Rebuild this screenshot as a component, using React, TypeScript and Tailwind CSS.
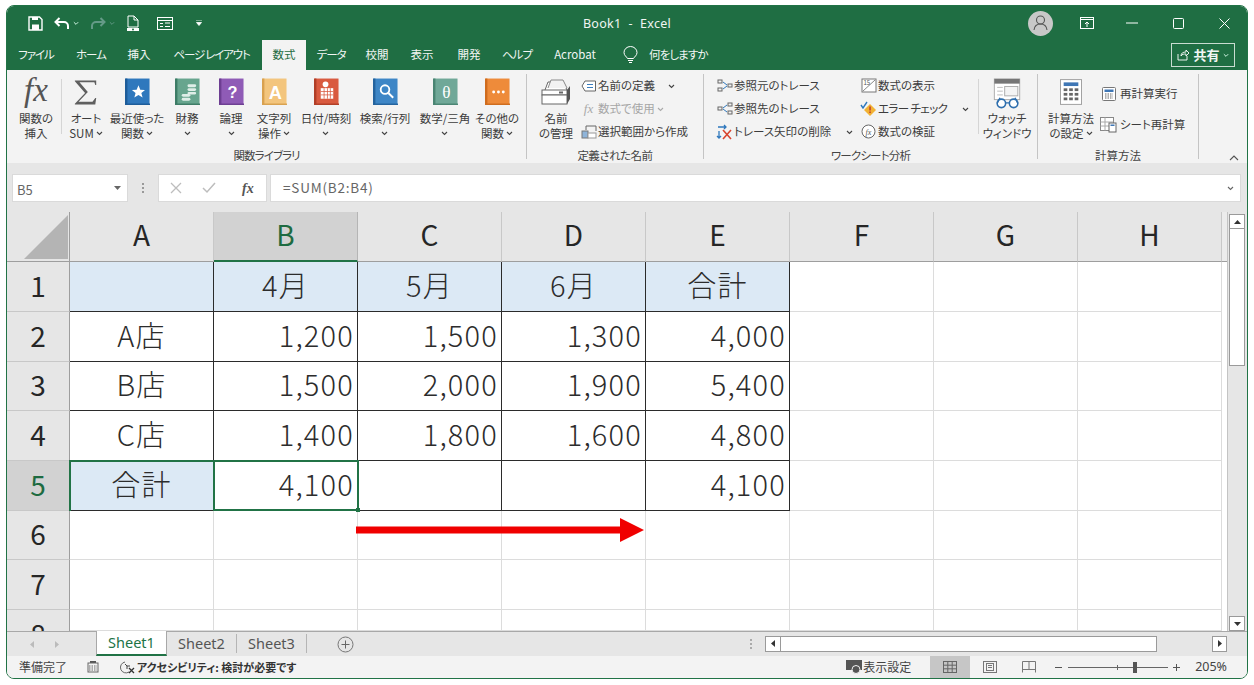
import React from "react";

const Chev = ({ c = "#444", w = 7 }: { c?: string; w?: number }) => (
  <svg width={w} height={5} viewBox="0 0 7 5" className="inline-block shrink-0"><path d="M1 1l2.5 2.5L6 1" fill="none" stroke={c} strokeWidth="1.1" /></svg>
);

const Book = ({ color, spine, children }: { color: string; spine: string; children: React.ReactNode }) => (
  <svg width="25" height="28" viewBox="0 0 26 28">
    <rect x="0.5" y="0" width="25" height="27" fill={color} />
    <rect x="0" y="0" width="2.5" height="27" fill={spine} />
    <rect x="0" y="26" width="26" height="1.5" fill={spine} />
    {children}
  </svg>
);

const G = ({ children, x = 14, y = 20, s = 17 }: { children: string; x?: number; y?: number; s?: number }) => (
  <text x={x} y={y} fontSize={s} fill="#fff" textAnchor="middle" fontWeight="700" fontFamily="Liberation Sans, sans-serif">{children}</text>
);

const ribbonIcons: Record<string, React.ReactNode> = {
  sigma: <svg width="26" height="27" viewBox="0 0 28 28"><path d="M2 1h23v5h-1l-1-3H7l9 10.5L6 24h15l3-4h1l-1 7H2v-1l11-11.5L2 2z" fill="#5f5f5f" /></svg>,
  star: <Book color="#2f78bd" spine="#1d5c99"><path d="M14 7l1.9 4.6 4.9.3-3.8 3.1 1.3 4.8-4.3-2.7-4.3 2.7 1.3-4.8-3.8-3.1 4.9-.3z" fill="#fff" /></Book>,
  coin: <Book color="#67a58e" spine="#3d7c66"><g fill="#dfeee8"><rect x="7" y="16" width="9" height="3" rx="1.5" /><rect x="7" y="20" width="9" height="3" rx="1.5" /><rect x="13" y="6" width="9" height="3" rx="1.5" /><rect x="13" y="10" width="9" height="3" rx="1.5" /><rect x="13" y="14" width="9" height="2.5" rx="1.2" /></g></Book>,
  q: <Book color="#8f5bb6" spine="#6d3e92"><G>?</G></Book>,
  a: <Book color="#f3c57d" spine="#d9a14f"><G s={19} y={21}>A</G></Book>,
  cal: <Book color="#d95a3f" spine="#b13e27"><circle cx="12" cy="6" r="3" fill="#fff" /><rect x="7" y="10" width="13" height="11" fill="#fff" /><path d="M7 13.5h13M7 17h13M10.5 10v11M14 10v11M17 10v11" stroke="#d95a3f" strokeWidth=".8" /></Book>,
  search: <Book color="#3e86c6" spine="#24639e"><circle cx="12.5" cy="11.5" r="4.5" fill="none" stroke="#fff" strokeWidth="1.9" /><path d="M16 15l5 5" stroke="#fff" strokeWidth="2" /></Book>,
  theta: <Book color="#70a898" spine="#4a8573"><text x="14" y="20" fontSize="18" fill="#fff" textAnchor="middle" fontFamily="Liberation Serif, serif">θ</text></Book>,
  more: <Book color="#ee8b3a" spine="#cf6c1e"><circle cx="9" cy="14" r="1.5" fill="#fff" /><circle cx="14" cy="14" r="1.5" fill="#fff" /><circle cx="19" cy="14" r="1.5" fill="#fff" /></Book>,
  name: <svg width="30" height="28" viewBox="0 0 30 28"><path d="M4 12l3-8h15l4 8" fill="#fff" stroke="#666" /><path d="M7 10l3-8h12l4 8" fill="#f2f2f2" stroke="#888" /><rect x="1" y="12" width="25" height="5" fill="#fff" stroke="#666" /><rect x="1" y="17" width="25" height="9" fill="#fff" stroke="#666" /><path d="M26 12l3-4v13l-3 5z" fill="#555" /><rect x="18" y="13.5" width="4" height="2" fill="#666" /></svg>,
  watch: <svg width="29" height="31" viewBox="0 0 30 33"><rect x="1" y="1" width="27" height="22" fill="#fff" stroke="#aaa" /><rect x="1" y="1" width="27" height="5" fill="#767676" /><path d="M4 10h6M4 14h6M4 18h6" stroke="#bbb" /><rect x="12" y="9" width="14" height="10" fill="#f4f4f4" stroke="#aaa" /><circle cx="8.5" cy="27" r="4.5" fill="#fff" stroke="#2f6fae" strokeWidth="1.7" /><circle cx="21.5" cy="27" r="4.5" fill="#fff" stroke="#2f6fae" strokeWidth="1.7" /><path d="M13 26.5h4M4 27l3-6M26 27l-3-6" stroke="#2f6fae" strokeWidth="1.5" fill="none" /></svg>,
  calc: <svg width="22" height="28" viewBox="0 0 24 28"><rect x=".5" y=".5" width="23" height="27" fill="#fff" stroke="#9a9a9a" /><rect x="4" y="3.5" width="16" height="4" fill="#3f77b5" /><g fill="#666"><rect x="4" y="10" width="4" height="3" /><rect x="10" y="10" width="4" height="3" /><rect x="16" y="10" width="4" height="3" /><rect x="4" y="15" width="4" height="3" /><rect x="10" y="15" width="4" height="3" /><rect x="16" y="15" width="4" height="3" /><rect x="4" y="20" width="4" height="3" /><rect x="10" y="20" width="4" height="3" /><rect x="16" y="20" width="4" height="3" /></g></svg>,
};

const bigs: { w: string; icon: React.ReactNode; lines: React.ReactNode[] }[] = [
  { w: "w-[48px]", icon: ribbonIcons.sigma, lines: ["オート", <>SUM <Chev /></>] },
  { w: "w-[54px]", icon: ribbonIcons.star, lines: ["最近使った", <>関数 <Chev /></>] },
  { w: "w-[46px]", icon: ribbonIcons.coin, lines: ["財務", <Chev />] },
  { w: "w-[42px]", icon: ribbonIcons.q, lines: ["論理", <Chev />] },
  { w: "w-[44px]", icon: ribbonIcons.a, lines: ["文字列", <>操作 <Chev /></>] },
  { w: "w-[60px]", icon: ribbonIcons.cal, lines: ["日付/時刻", <Chev />] },
  { w: "w-[58px]", icon: ribbonIcons.search, lines: ["検索/行列", <Chev />] },
  { w: "w-[62px]", icon: ribbonIcons.theta, lines: ["数学/三角", <Chev />] },
  { w: "w-[42px]", icon: ribbonIcons.more, lines: ["その他の", <>関数 <Chev /></>] },
];

const Big = ({ w, icon, lines, gap = "h-[36px]", mt = "mt-[5px]" }: { w: string; icon: React.ReactNode; lines: React.ReactNode[]; gap?: string; mt?: string }) => (
  <div className={`${w} shrink-0 flex flex-col items-center`}>
    <div className={`${gap} flex items-end justify-center`}>{icon}</div>
    <div className={`${mt} leading-[15px] text-center whitespace-nowrap`}>
      {lines.map((l, i) => <div key={i} className="h-[15px] flex items-center justify-center gap-[2px]">{l}</div>)}
    </div>
  </div>
);

const Sm = ({ icon, text, muted, chev, cls = "" }: { icon: React.ReactNode; text: string; muted?: boolean; chev?: React.ReactNode; cls?: string }) => (
  <div className={`h-[23px] flex items-center whitespace-nowrap ${muted ? "text-[#a6a6a6]" : ""}`}>
    <span className="w-[19px] flex justify-center shrink-0">{icon}</span>
    <span className={cls}>{text}</span>
    {chev}
  </div>
);

const small = {
  def: <svg width="16" height="12" viewBox="0 0 16 12"><path d="M4 1h10.500v10H4L1 6z" fill="#fff" stroke="#666" /><path d="M6 4.500h6M6 7.500h6" stroke="#3b7ebf" /></svg>,
  use: <span className="font-['Liberation_Serif'] italic text-[13px] text-[#aaa]">fx</span>,
  sel: <svg width="16" height="14" viewBox="0 0 16 14"><rect x="1" y="6" width="6" height="7" fill="#8fb4d9" stroke="#777" /><rect x="7" y="8" width="8" height="5" fill="#fff" stroke="#999" /><path d="M5 5V1h10v5" fill="none" stroke="#666" /></svg>,
  prec: <svg width="16" height="14" viewBox="0 0 16 14"><g fill="none" stroke="#666"><rect x="1" y="1" width="4" height="3" /><rect x="1" y="9" width="4" height="3" /><rect x="11" y="5" width="4" height="3" /></g><path d="M6 3l4 3M6 10l4-3" stroke="#2f78bd" /></svg>,
  dep: <svg width="16" height="14" viewBox="0 0 16 14"><g fill="none" stroke="#666"><rect x="1" y="5" width="4" height="3" /><rect x="11" y="1" width="4" height="3" /><rect x="11" y="9" width="4" height="3" /></g><path d="M6 6l4-3M6 7l4 3" stroke="#2f78bd" /></svg>,
  rem: <svg width="17" height="16" viewBox="0 0 17 16"><path d="M2 3h8M8 1l2 2-2 2M3 7v7M1 12l2 2 2-2" fill="none" stroke="#2f78bd" strokeWidth="1.3" /><path d="M7 6l8 9M15 6l-8 9" stroke="#d8452f" strokeWidth="1.6" /></svg>,
  show: <svg width="16" height="15" viewBox="0 0 16 15"><rect x="1" y="1" width="14" height="13" fill="#fff" stroke="#777" /><path d="M2 13L14 2" stroke="#888" /><text x="2.500" y="7" fontSize="6" fill="#555">15</text></svg>,
  err: <svg width="18" height="15" viewBox="0 0 18 15"><path d="M1 4l2 3 4-6" stroke="#2f78bd" strokeWidth="1.4" fill="none" /><path d="M10 3l6 6-6 6-6-6z" fill="#f2b233" /><rect x="9.300" y="5.500" width="1.500" height="4" fill="#c0392b" /><rect x="9.300" y="10.500" width="1.500" height="1.500" fill="#c0392b" /></svg>,
  eval: <svg width="15" height="15" viewBox="0 0 15 15"><circle cx="7.500" cy="7.500" r="6.500" fill="#fff" stroke="#666" /><text x="7.500" y="10.500" fontSize="8" textAnchor="middle" fontStyle="italic" fill="#555" fontFamily="Liberation Serif, serif">fx</text></svg>,
  now: <svg width="14" height="14" viewBox="0 0 14 14"><rect x=".5" y=".5" width="13" height="13" rx="1" fill="#fff" stroke="#777" /><rect x="2.500" y="2.500" width="9" height="2.500" fill="#3f77b5" /><path d="M3 7h8M3 9h8M3 11h8" stroke="#666" strokeDasharray="1.500 1" /></svg>,
  sheet: <svg width="18" height="16" viewBox="0 0 18 16"><rect x=".5" y=".5" width="13" height="13" fill="#fff" stroke="#888" /><path d="M.5 5h13M.5 9h13M5 .5v13" stroke="#aaa" /><rect x="9" y="6" width="7" height="9" fill="#fff" stroke="#666" /><rect x="10.500" y="7.500" width="4" height="1.500" fill="#3f77b5" /></svg>,
};

const tabs: [string, string][] = [
  ["ファイル", "w-[58px] tracking-[-1px]"], ["ホーム", "w-[52px] tracking-[-1px]"], ["挿入", "w-[44px]"], ["ページ レイアウト", "w-[101px] tracking-[-1.2px]"],
];
const tabs2: [string, string][] = [
  ["データ", "w-[50px] tracking-[-1.2px]"], ["校閲", "w-[42px]"], ["表示", "w-[48px]"], ["開発", "w-[46px]"], ["ヘルプ", "w-[50px] tracking-[-1px]"], ["Acrobat", "w-[66px]"],
];

const H = ({ children, on }: { children: React.ReactNode; on?: boolean }) => (
  <div className={`flex items-center justify-center border-r border-b pb-[5px] ${on ? "bg-[#d2d2d2] text-[#1e6b41] border-r-[#b5b5b5] border-b-2 border-b-[#217346]" : "bg-[#e6e6e6] border-r-[#c8c8c8] border-b-[#9e9e9e]"}`}>{children}</div>
);
const R = ({ children, on }: { children: React.ReactNode; on?: boolean }) => (
  <div className={`flex items-center justify-center overflow-hidden pb-[4px] border-r border-r-[#9e9e9e] border-b border-b-[#c8c8c8] ${on ? "bg-[#d2d2d2] text-[#1e6b41]" : "bg-[#e6e6e6]"}`}>{children}</div>
);
const C = ({ t, kind }: { t?: string; kind: "head" | "center" | "num" | "sum" }) => {
  const cls = {
    head: "bg-[#dce9f5] justify-center",
    center: "justify-center",
    sum: "bg-[#dce9f5] justify-center",
    num: "justify-end pr-[3px]",
  }[kind];
  return <div className={`flex items-center pb-[5px] text-[29px] tracking-[1.2px] font-light border-r border-b border-[#2b2b2b] text-[#2c2c2c] ${cls}`}>{t}</div>;
};
const E = () => <div className="border-r border-b border-[#dcdcdc]" />;
const Blank = ({ n }: { n: number }) => <>{Array.from({ length: n }).map((_, i) => <E key={i} />)}</>;

const rows: [string, string, string, string, string][] = [
  ["A店", "1,200", "1,500", "1,300", "4,000"],
  ["B店", "1,500", "2,000", "1,900", "5,400"],
  ["C店", "1,400", "1,800", "1,600", "4,800"],
];

export default function App() {
  return (
    <div className="w-[1254px] h-[685px] bg-white pt-[5px] pl-[6px] overflow-hidden font-['Noto_Sans_CJK_JP','Noto_Sans',sans-serif]">
      <div className="w-[1242px] h-[674px] rounded-[8px] border border-[#217346] overflow-hidden flex flex-col bg-[#f3f3f3]">
        {/* title */}
        <div className="h-[34px] shrink-0 bg-[#1f6e43] text-white grid grid-cols-[1fr_auto_1fr] items-center">
          <div className="flex items-center pl-[21px] gap-[11px]">
            <svg width="15" height="15" viewBox="0 0 15 15"><path d="M1 1h10.500L14 3.500V14H1z" fill="none" stroke="#fff" strokeWidth="1.4" /><rect x="4" y="8.500" width="7" height="5.500" fill="#fff" /><rect x="4" y="1" width="6" height="3" fill="#fff" /></svg>
            <div className="flex items-center gap-[3px]">
              <svg width="16" height="13" viewBox="0 0 16 13"><path d="M5.500 1L1.500 5l4 4M2 5h8a4 4 0 014 4v3" fill="none" stroke="#fff" strokeWidth="2" /></svg>
              <Chev c="#dfe" w={6} />
            </div>
            <div className="flex items-center gap-[3px] opacity-40">
              <svg width="16" height="13" viewBox="0 0 16 13"><path d="M10.500 1l4 4-4 4M14 5H6a4 4 0 00-4 4v3" fill="none" stroke="#cde" strokeWidth="2" /></svg>
              <Chev c="#cde" w={6} />
            </div>
            <svg width="14" height="17" viewBox="0 0 14 17"><path d="M2 1h6l4 4v7H2z" fill="none" stroke="#fff" /><path d="M8 1v4h4" fill="none" stroke="#fff" /><rect x="1" y="13" width="12" height="3" fill="#fff" /><circle cx="7" cy="14.500" r="1" fill="#1f6e43" /></svg>
            <svg className="ml-[6px]" width="16" height="13" viewBox="0 0 16 13"><rect x=".5" y=".5" width="15" height="12" fill="none" stroke="#fff" /><path d="M.5 3.500h15M3 6.500h3M3 9.500h3M8 6h5M8 9.500h5" stroke="#fff" /></svg>
            <svg className="ml-[12px]" width="6" height="6" viewBox="0 0 6 6"><path d="M0 0h6M.5 2.500h5l-2.500 3z" stroke="#fff" strokeWidth=".8" fill="#fff" /></svg>
          </div>
          <div className="text-[12.500px] pt-[2px] whitespace-pre text-[#f0f5f2] tracking-[.3px] font-['Noto_Sans',sans-serif]">Book1  -  Excel</div>
          <div className="flex items-center justify-end h-full pr-[17px]">
            <div className="w-[25px] h-[25px] rounded-full bg-[#c8c8c8] flex items-center justify-center mr-[27px]">
              <svg width="15" height="16" viewBox="0 0 15 16"><circle cx="7.500" cy="5" r="4" fill="none" stroke="#555" strokeWidth="1.100" /><path d="M1 15c.5-4 3-6 6.500-6S13.500 11 14 15" fill="none" stroke="#555" strokeWidth="1.100" /></svg>
            </div>
            <svg className="mr-[32px]" width="14" height="12" viewBox="0 0 14 12"><rect x=".5" y=".5" width="13" height="11" fill="none" stroke="#fff" /><path d="M.5 2.500h13M7 10V5M5 7l2-2 2 2" stroke="#fff" fill="none" /></svg>
            <svg className="mr-[35px]" width="12" height="2" viewBox="0 0 12 2"><path d="M0 1h12" stroke="#fff" /></svg>
            <svg className="mr-[35px]" width="11" height="11" viewBox="0 0 11 11"><rect x=".5" y=".5" width="10" height="10" rx="1" fill="none" stroke="#fff" /></svg>
            <svg width="11" height="11" viewBox="0 0 11 11"><path d="M.5.5l10 10M10.500.5l-10 10" stroke="#fff" /></svg>
          </div>
        </div>
        {/* tabs */}
        <div className="h-[30px] shrink-0 bg-[#1f6e43] text-[#f2f6f4] text-[11.500px] flex items-stretch [font-feature-settings:'palt']">
          {tabs.map(([t, w]) => <div key={t} className={`${w} flex items-center justify-center`}>{t}</div>)}
          <div className="w-[44px] flex items-center justify-center bg-[#f3f3f3] text-[#1e6b41]">数式</div>
          {tabs2.map(([t, w]) => <div key={t} className={`${w} flex items-center justify-center`}>{t}</div>)}
          <div className="flex items-center ml-[15px] gap-[11px]">
            <svg width="15" height="18" viewBox="0 0 15 18"><path d="M4.500 12.500C3.500 10.500 1 9.500 1 6.500a6.500 6 0 0113 0c0 3-2.500 4-3.500 6z" fill="none" stroke="#fff" /><path d="M5 14.500h5M6 16.500h3" stroke="#fff" /></svg>
            <span className="tracking-[-.9px]">何をしますか</span>
          </div>
          <div className="ml-auto mr-[12px] mt-[3px] mb-[3px] w-[64px] border border-[#c9dcd1] flex items-center justify-center gap-[3px]">
            <svg width="13" height="12" viewBox="0 0 13 12"><path d="M1 5v6h9V7M4 7c0-3 2-4 5-4V1l3 3-3 3V5c-2 0-4 0-5 2z" fill="none" stroke="#fff" strokeWidth=".9" /></svg>
            <span className="font-bold text-[13px]">共有</span>
            <Chev c="#dfe" w={6} />
          </div>
        </div>
        {/* ribbon */}
        <div className="h-[93px] shrink-0 bg-[#f3f3f3] flex text-[11.500px] leading-none text-[#3c3c3c] [font-feature-settings:'palt'] relative">
          <div className="w-[519px] shrink-0 flex flex-col items-stretch">
            <div className="h-[78px] flex pl-[4px]">
              <Big w="w-[50px]" icon={<span className="font-['Liberation_Serif'] italic text-[33px] leading-[32px] text-[#555]">fx</span>} lines={["関数の", "挿入"]} />
              <div className="w-[1px] h-[55px] mt-[9px] bg-[#d5d5d5]" />
              {bigs.map((b, i) => <Big key={i} {...b} />)}
            </div>
            <div className="h-[15px] text-center leading-[15px] text-[#444] tracking-[-.9px]">関数ライブラリ</div>
          </div>
          <div className="w-[1px] h-[85px] mt-[4px] bg-[#c4c4c4] shrink-0" />
          <div className="w-[176px] shrink-0 flex flex-col">
            <div className="h-[78px] flex">
              <Big w="w-[58px]" icon={ribbonIcons.name} lines={["名前", "の管理"]} />
              <div className="pt-[4px] -ml-[6px]">
                <Sm icon={small.def} text="名前の定義" chev={<span className="ml-[13px]"><Chev /></span>} />
                <Sm icon={small.use} text="数式で使用" muted chev={<span className="ml-[2px]"><Chev c="#aaa" /></span>} />
                <Sm icon={small.sel} text="選択範囲から作成" />
              </div>
            </div>
            <div className="h-[15px] text-center leading-[15px] text-[#444] tracking-[-.5px]">定義された名前</div>
          </div>
          <div className="w-[1px] h-[85px] mt-[4px] bg-[#c4c4c4] shrink-0" />
          <div className="w-[333px] shrink-0 flex flex-col">
            <div className="h-[78px] flex">
              <div className="w-[149px] pl-[11px] pt-[4px]">
                <Sm icon={small.prec} text="参照元のトレース" />
                <Sm icon={small.dep} text="参照先のトレース" />
                <Sm icon={small.rem} text="トレース矢印の削除" chev={<span className="ml-[15px]"><Chev /></span>} />
              </div>
              <div className="w-[125px] pt-[4px] pl-[6px]">
                <Sm icon={small.show} text="数式の表示" />
                <Sm icon={small.err} text="エラー チェック" cls="tracking-[-.6px]" chev={<span className="ml-[15px]"><Chev /></span>} />
                <Sm icon={small.eval} text="数式の検証" />
              </div>
              <div className="w-[1px] h-[55px] mt-[9px] bg-[#d5d5d5] shrink-0" />
              <Big w="w-[56px]" gap="h-[39px]" mt="mt-[2px]" icon={ribbonIcons.watch} lines={["ウォッチ", "ウィンドウ"]} />
            </div>
            <div className="h-[15px] text-center leading-[15px] text-[#444] tracking-[-.8px]">ワークシート分析</div>
          </div>
          <div className="w-[1px] h-[85px] mt-[4px] bg-[#c4c4c4] shrink-0" />
          <div className="w-[160px] shrink-0 flex flex-col">
            <div className="h-[78px] flex">
              <Big w="w-[66px]" icon={ribbonIcons.calc} lines={["計算方法", <>の設定 <Chev /></>]} />
              <div className="pt-[8px] -ml-[6px]">
                <div className="h-[31px] flex items-center whitespace-nowrap"><span className="w-[22px] flex justify-center">{small.now}</span>再計算実行</div>
                <div className="h-[31px] flex items-center whitespace-nowrap"><span className="w-[22px] flex justify-center">{small.sheet}</span>シート再計算</div>
              </div>
            </div>
            <div className="h-[15px] text-center leading-[15px] text-[#444]">計算方法</div>
          </div>
          <div className="w-[1px] h-[85px] mt-[4px] bg-[#c4c4c4] shrink-0" />
          <div className="flex-1 flex items-end justify-end pr-[8px] pb-[2px]">
            <svg width="10" height="6" viewBox="0 0 10 6"><path d="M1 5l4-4 4 4" fill="none" stroke="#555" strokeWidth="1.100" /></svg>
          </div>
        </div>
        {/* formula bar */}
        <div className="h-[49px] shrink-0 bg-[#e6e6e6] flex pt-[11px] pl-[5px] pr-[6px] text-[13.500px] text-[#666]">
          <div className="w-[116px] h-[28px] bg-white border border-[#dadada] flex items-center justify-between pl-[4px] pr-[6px]">
            <span className="mt-[3px] text-[13px]">B5</span>
            <svg width="7" height="4" viewBox="0 0 7 4"><path d="M0 0h7L3.500 4z" fill="#666" /></svg>
          </div>
          <div className="w-[30px] h-[28px] flex flex-col items-center justify-center gap-[2px]">
            {[0, 1, 2].map((i) => <span key={i} className="w-[2px] h-[2px] bg-[#999]" />)}
          </div>
          <div className="w-[109px] h-[28px] bg-white border border-[#dadada] flex items-center pl-[11px] gap-[20px]">
            <svg width="12" height="12" viewBox="0 0 12 12"><path d="M1 1l10 10M11 1L1 11" stroke="#bdbdbd" strokeWidth="1.300" /></svg>
            <svg width="14" height="12" viewBox="0 0 14 12"><path d="M1 6l4 4 8-9" fill="none" stroke="#bdbdbd" strokeWidth="1.500" /></svg>
            <span className="font-['Liberation_Serif'] italic font-bold text-[14px] text-[#555] ml-[6px]">fx</span>
          </div>
          <div className="ml-[3px] flex-1 h-[28px] bg-white border border-[#dadada] flex items-center justify-between pl-[12px] pr-[5px]">
            <span className="mb-[2px] tracking-[.8px]">=SUM(B2:B4)</span>
            <Chev c="#666" w={9} />
          </div>
        </div>
        {/* sheet */}
        <div className="h-[419px] shrink-0 flex bg-white">
          <div className="w-[1215px] shrink-0 relative">
            <div className="grid grid-cols-[63px_repeat(8,144px)] grid-rows-[50px_50px_50px_49px_50px_50px_49px_50px_21px] h-[419px] text-[28px] leading-none text-[#262626] overflow-hidden">
              <div className="bg-[#e6e6e6] border-r border-b border-[#9e9e9e] flex items-end justify-end pr-[1px] pb-[2px]">
                <div className="w-0 h-0 relative"><span className="absolute right-0 bottom-0 w-0 h-0 border-b-[44px] border-l-[44px] border-b-[#b4b4b4] border-l-transparent" /></div>
              </div>
              <H>A</H><H on>B</H><H>C</H><H>D</H><H>E</H><H>F</H><H>G</H><H>H</H>

              <R>1</R>
              <C kind="head" /><C kind="head" t="4月" /><C kind="head" t="5月" /><C kind="head" t="6月" /><C kind="head" t="合計" /><Blank n={3} />

              {rows.map((r, i) => (
                <React.Fragment key={i}>
                  <R>{i + 2}</R>
                  <C kind="center" t={r[0]} /><C kind="num" t={r[1]} /><C kind="num" t={r[2]} /><C kind="num" t={r[3]} /><C kind="num" t={r[4]} /><Blank n={3} />
                </React.Fragment>
              ))}

              <R on>5</R>
              <C kind="sum" t="合計" /><C kind="num" t="4,100" /><C kind="num" /><C kind="num" /><C kind="num" t="4,100" /><Blank n={3} />
              <R>6</R><Blank n={8} />
              <R>7</R><Blank n={8} />
              <div className="bg-[#e6e6e6] border-r border-r-[#9e9e9e] overflow-hidden flex justify-center pt-[9px]">8</div><Blank n={8} />
            </div>
            {/* overlays: selection and arrow */}
            <div className="absolute left-[62px] top-[248px] w-[145px] h-[51px] border-l-2 border-t-2 border-[#217346]" />
            <div className="absolute left-[206px] top-[248px] w-[146px] h-[51px] border-2 border-[#217346]">
              <span className="absolute -right-[3px] -bottom-[3px] w-[4px] h-[4px] bg-[#217346]" />
            </div>
            <svg className="absolute left-[349px] top-[306px]" width="290" height="24" viewBox="0 0 290 24"><path d="M0 8.500h264V0l24 12-24 12v-8.500H0z" fill="#f00000" /></svg>
          </div>
          <div className="w-[6px] shrink-0 flex flex-col border-r border-r-[#c4c4c4]">
            <div className="h-[50px] bg-[#ececec] border-b border-b-[#9e9e9e]" />
            <div className="flex-1 bg-white" />
          </div>
          <div className="flex-1 bg-[#e6e6e6] pl-[1px] pt-[2px] flex flex-col">
            <div className="w-[16px] h-[15px] bg-white border border-[#9a9a9a] flex items-center justify-center"><svg width="7" height="4" viewBox="0 0 7 4"><path d="M0 4h7L3.500 0z" fill="#333" /></svg></div>
            <div className="w-[16px] h-[137px] bg-white border-x border-b border-[#9a9a9a]" />
            <div className="flex-1" />
            <div className="w-[16px] h-[15px] bg-white border border-[#9a9a9a] flex items-center justify-center"><svg width="7" height="4" viewBox="0 0 7 4"><path d="M0 0h7L3.500 4z" fill="#333" /></svg></div>
          </div>
        </div>
        {/* sheet tabs */}
        <div className="h-[25px] shrink-0 bg-[#e6e6e6] border-t border-[#a8a8a8] flex text-[14.500px] text-[#555] font-['Noto_Sans',sans-serif]">
          <div className="w-[89px] flex items-center pl-[23px] gap-[21px]">
            <svg width="4" height="7" viewBox="0 0 4 7"><path d="M4 0v7L0 3.500z" fill="#bbb" /></svg>
            <svg width="4" height="7" viewBox="0 0 4 7"><path d="M0 0v7l4-3.500z" fill="#bbb" /></svg>
          </div>
          <div className="w-[71px] -mt-[1px] bg-white border-x border-[#a8a8a8] border-b-2 border-b-[#217346] text-[#217346] flex items-center justify-center">Sheet1</div>
          <div className="w-[69px] flex items-center justify-center">Sheet2</div>
          <div className="w-[1px] h-[19px] mt-[2px] bg-[#b5b5b5]" />
          <div className="w-[69px] flex items-center justify-center">Sheet3</div>
          <div className="w-[1px] h-[19px] mt-[2px] bg-[#b5b5b5]" />
          <div className="w-[30px]" />
          <div className="flex items-center">
            <svg width="17" height="17" viewBox="0 0 17 17"><circle cx="8.500" cy="8.500" r="7.500" fill="none" stroke="#777" /><path d="M8.500 4.500v8M4.500 8.500h8" stroke="#666" /></svg>
          </div>
          <div className="w-[411px] flex items-center justify-end pr-[13px]">
            <div className="flex flex-col gap-[2px]">{[0, 1, 2].map((i) => <span key={i} className="w-[2px] h-[2px] bg-[#aaa]" />)}</div>
          </div>
          <div className="flex items-center mt-[-1px]">
            <div className="w-[16px] h-[16px] bg-white border border-[#9a9a9a] flex items-center justify-center"><svg width="4" height="7" viewBox="0 0 4 7"><path d="M4 0v7L0 3.500z" fill="#333" /></svg></div>
            <div className="w-[376px] h-[16px] bg-white border-y border-r border-[#9a9a9a]" />
            <div className="w-[55px]" />
            <div className="w-[15px] h-[16px] bg-white border border-[#9a9a9a] flex items-center justify-center"><svg width="4" height="7" viewBox="0 0 4 7"><path d="M0 0v7l4-3.500z" fill="#333" /></svg></div>
          </div>
        </div>
        {/* status */}
        <div className="flex-1 bg-[#f3f3f3] flex items-center text-[12px] text-[#444] [font-feature-settings:'palt']">
          <span className="ml-[12px] w-[68px]">準備完了</span>
          <svg width="12" height="12" viewBox="0 0 12 12"><rect x="3" y="0" width="6" height="2" fill="#555" /><rect x="1" y="2" width="10" height="9" fill="none" stroke="#666" /><path d="M2 5h8M2 7h8M2 9h8" stroke="#666" strokeDasharray="1.500 1" /></svg>
          <svg className="ml-[21px]" width="16" height="15" viewBox="0 0 16 15"><path d="M5 2a5.500 5.500 0 104 10" fill="none" stroke="#666" /><path d="M5 4l2 2h3M7 6v3" stroke="#444" fill="none" /><path d="M9 8l5 5M14 8l-5 5" stroke="#333" strokeWidth="1.300" /></svg>
          <span className="ml-[1px] font-bold text-[11px] text-[#333]">アクセシビリティ: 検討が必要です</span>
          <div className="ml-auto flex items-center h-full">
            <svg width="16" height="14" viewBox="0 0 16 14"><rect x="0" y="0" width="16" height="10" fill="#555" /><circle cx="10" cy="9.500" r="4" fill="#555" stroke="#f3f3f3" /></svg>
            <span className="ml-[1px] w-[67px]">表示設定</span>
            <div className="w-[40px] h-full bg-[#c6c6c6] flex items-center justify-center">
              <svg width="14" height="12" viewBox="0 0 14 12"><rect x=".5" y=".5" width="13" height="11" fill="none" stroke="#666" /><path d="M.5 4.200h13M.5 7.800h13M4.800.5v11M9.200.5v11" stroke="#666" /></svg>
            </div>
            <div className="w-[39px] flex items-center justify-center">
              <svg width="14" height="12" viewBox="0 0 14 12"><rect x=".5" y=".5" width="13" height="11" fill="none" stroke="#777" /><rect x="3.500" y="2.500" width="7" height="7" fill="none" stroke="#777" /><path d="M5 4.500h4M5 6.500h4" stroke="#777" /></svg>
            </div>
            <div className="w-[39px] flex items-center justify-center">
              <svg width="14" height="12" viewBox="0 0 14 12"><path d="M.5 11.500V.5h13v11M.5 8.500h13M7 .5v8" fill="none" stroke="#777" /></svg>
            </div>
            <div className="ml-[7px] flex items-center">
              <span className="w-[7px] h-[1px] bg-[#555]" />
              <div className="ml-[6px] w-[100px] h-[1px] bg-[#666] relative">
                <span className="absolute left-[49px] -top-[2px] w-[1px] h-[5px] bg-[#666]" />
                <span className="absolute left-[65px] -top-[5px] w-[4px] h-[11px] bg-[#555]" />
              </div>
              <svg className="ml-[5px]" width="7" height="7" viewBox="0 0 7 7"><path d="M3.500 0v7M0 3.500h7" stroke="#555" /></svg>
            </div>
            <span className="ml-[15px] mr-[20px] text-[12.500px] font-['Noto_Sans',sans-serif]">205%</span>
          </div>
        </div>
      </div>
    </div>
  );
}
